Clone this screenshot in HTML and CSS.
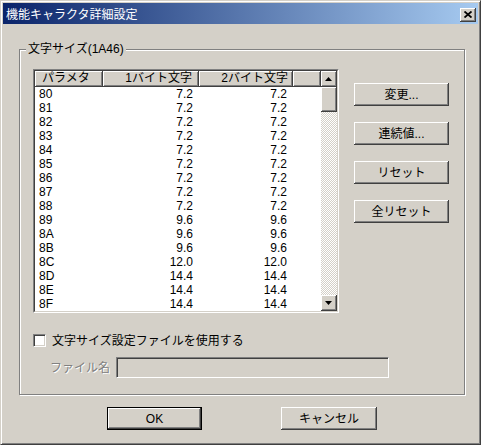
FILE: index.html
```html
<!DOCTYPE html>
<html lang="ja">
<head>
<meta charset="utf-8">
<title>機能キャラクタ詳細設定</title>
<link rel="stylesheet" href="styles.css">
</head>
<body>
<div class="window">
  <div class="titlebar">
    <span class="title">機能キャラクタ詳細設定</span>
    <span class="close raised">
      <svg width="8" height="7" viewBox="0 0 8 7"><path d="M0.5 0.5 L7.5 6.5 M7.5 0.5 L0.5 6.5" stroke="#000" stroke-width="1.8" fill="none"/></svg>
    </span>
  </div>
  <div class="group">
    <span class="legend">文字サイズ(1A46)</span>
    <div class="main">
      <div class="list">
        <div class="list-body">
          <div class="grid-area">
            <div class="hdr">
              <div class="hcell c1">パラメタ</div>
              <div class="hcell c2 r">1バイト文字</div>
              <div class="hcell c3 r">2バイト文字</div>
              <div class="hcell c4"></div>
            </div>
            <div class="rows">
              <div class="row"><span class="c1">80</span><span class="c2 r">7.2</span><span class="c3 r">7.2</span></div>
              <div class="row"><span class="c1">81</span><span class="c2 r">7.2</span><span class="c3 r">7.2</span></div>
              <div class="row"><span class="c1">82</span><span class="c2 r">7.2</span><span class="c3 r">7.2</span></div>
              <div class="row"><span class="c1">83</span><span class="c2 r">7.2</span><span class="c3 r">7.2</span></div>
              <div class="row"><span class="c1">84</span><span class="c2 r">7.2</span><span class="c3 r">7.2</span></div>
              <div class="row"><span class="c1">85</span><span class="c2 r">7.2</span><span class="c3 r">7.2</span></div>
              <div class="row"><span class="c1">86</span><span class="c2 r">7.2</span><span class="c3 r">7.2</span></div>
              <div class="row"><span class="c1">87</span><span class="c2 r">7.2</span><span class="c3 r">7.2</span></div>
              <div class="row"><span class="c1">88</span><span class="c2 r">7.2</span><span class="c3 r">7.2</span></div>
              <div class="row"><span class="c1">89</span><span class="c2 r">9.6</span><span class="c3 r">9.6</span></div>
              <div class="row"><span class="c1">8A</span><span class="c2 r">9.6</span><span class="c3 r">9.6</span></div>
              <div class="row"><span class="c1">8B</span><span class="c2 r">9.6</span><span class="c3 r">9.6</span></div>
              <div class="row"><span class="c1">8C</span><span class="c2 r">12.0</span><span class="c3 r">12.0</span></div>
              <div class="row"><span class="c1">8D</span><span class="c2 r">14.4</span><span class="c3 r">14.4</span></div>
              <div class="row"><span class="c1">8E</span><span class="c2 r">14.4</span><span class="c3 r">14.4</span></div>
              <div class="row"><span class="c1">8F</span><span class="c2 r">14.4</span><span class="c3 r">14.4</span></div>
            </div>
          </div>
          <div class="sb">
            <div class="sbtn raised"><svg width="7" height="4" viewBox="0 0 7 4"><path d="M3.5 0 L7 4 L0 4 Z" fill="#000"/></svg></div>
            <div class="track"><div class="thumb raised"></div></div>
            <div class="sbtn raised"><svg width="7" height="4" viewBox="0 0 7 4"><path d="M0 0 L7 0 L3.5 4 Z" fill="#000"/></svg></div>
          </div>
        </div>
      </div>
      <div class="btns">
        <div class="btn raised">変更...</div>
        <div class="btn raised">連続値...</div>
        <div class="btn raised">リセット</div>
        <div class="btn raised">全リセット</div>
      </div>
    </div>
    <div class="check-row">
      <span class="cb"></span>
      <span class="cb-label">文字サイズ設定ファイルを使用する</span>
    </div>
    <div class="file-row">
      <span class="flabel">ファイル名</span>
      <span class="finput"></span>
    </div>
  </div>
  <div class="footer">
    <div class="btn raised default">OK</div>
    <div class="btn raised cancel">キャンセル</div>
  </div>
</div>
</body>
</html>
```
FILE: styles.css
```css
* { box-sizing: border-box; }
body {
  margin: 0;
  background: #fff;
  font-family: "Liberation Sans", "Noto Sans CJK JP", sans-serif;
  font-size: 12px;
  color: #000;
}
.window {
  width: 481px;
  height: 445px;
  background: #d4d0c8;
  border: 1px solid;
  border-color: #d4d0c8 #404040 #404040 #d4d0c8;
  box-shadow: inset 1px 1px #fff, inset -1px -1px #808080;
  padding: 2px;
  display: flex;
  flex-direction: column;
}
.titlebar {
  height: 21px;
  flex: none;
  background: linear-gradient(to right, #0a246a, #a6caf0);
  display: flex;
  align-items: center;
  justify-content: space-between;
  padding: 0 2px 0 3px;
}
.title {
  color: #fff;
  font-weight: normal;
  font-size: 12px;
  line-height: 14px;
  font-family: "Noto Sans CJK JP", sans-serif;
}
.raised {
  background: #d4d0c8;
  box-shadow: inset -1px -1px #404040, inset 1px 1px #fff, inset -2px -2px #808080;
}
.close {
  width: 16px;
  height: 14px;
  display: flex;
  align-items: center;
  justify-content: center;
  margin-top: 2px;
}
.close svg { margin: 0 1px 1px 0; }
.group {
  position: relative;
  margin: 25px 0 0 16px;
  width: 446px;
  border: 1px solid #808080;
  box-shadow: inset 1px 1px #fff, 1px 1px #fff;
  padding: 19px 0 16px 13px;
  flex: none;
}
.legend {
  position: absolute;
  left: 6px;
  top: -8px;
  padding: 0 2px;
  background: #d4d0c8;
  line-height: 14px;
}
.main { display: flex; }
.list {
  width: 306px;
  height: 244px;
  border: 1px solid;
  border-color: #808080 #fff #fff #808080;
}
.list-body {
  height: 100%;
  border: 1px solid;
  border-color: #404040 #d4d0c8 #d4d0c8 #404040;
  background: #fff;
  display: flex;
}
.grid-area { width: 286px; }
.hdr { display: flex; height: 16px; }
.hcell {
  height: 16px;
  line-height: 15px;
  background: #d4d0c8;
  box-shadow: inset 1px 1px #fff, inset -1px -1px #808080;
  border-right: 1px solid #404040;
  border-bottom: 1px solid #404040;
  white-space: nowrap;
}
.c1 { width: 68px; padding-left: 4px; }
.c2 { width: 96px; padding-right: 6px; }
.c3 { width: 94px; padding-right: 6px; }
.c4 { width: 28px; }
.r { text-align: right; }
.hcell.c1 { padding-left: 7px; }
.hcell.c2 { padding-right: 6px; }
.hcell.c3 { padding-right: 4px; }
.row { display: flex; height: 14px; line-height: 14px; }
.row span { display: block; }
.sb {
  width: 16px;
  display: flex;
  flex-direction: column;
  background: conic-gradient(#d4d0c8 25%, #fff 0 50%, #d4d0c8 0 75%, #fff 0) 0 0 / 2px 2px;
}
.sbtn {
  width: 16px;
  height: 16px;
  flex: none;
  display: flex;
  align-items: center;
  justify-content: center;
}
.sbtn svg { margin: 0 1px 1px 0; }
.track { flex: 1; }
.thumb { width: 16px; height: 25px; }
.btns {
  margin-left: 15px;
  padding-top: 14px;
  display: flex;
  flex-direction: column;
  gap: 16px;
}
.btn {
  width: 95px;
  height: 23px;
  display: flex;
  align-items: center;
  justify-content: center;
  line-height: 14px;
}
.check-row {
  margin-top: 21px;
  height: 13px;
  display: flex;
  align-items: center;
}
.cb {
  width: 13px;
  height: 13px;
  background: #fff;
  border: 1px solid;
  border-color: #808080 #fff #fff #808080;
  box-shadow: inset 1px 1px #404040, inset -1px -1px #d4d0c8;
}
.cb-label { margin-left: 6px; line-height: 14px; }
.file-row {
  margin-top: 10px;
  height: 21px;
  display: flex;
  align-items: center;
}
.flabel {
  margin-left: 17px;
  width: 66px;
  color: #808080;
  text-shadow: 1px 1px #fff;
  line-height: 14px;
}
.finput {
  width: 273px;
  height: 21px;
  background: #d4d0c8;
  border: 1px solid;
  border-color: #808080 #fff #fff #808080;
  box-shadow: inset 1px 1px #404040, inset -1px -1px #d4d0c8;
}
.footer {
  display: flex;
  margin-top: 12px;
  padding-left: 104px;
}
.default {
  border: 1px solid #000;
}
.cancel {
  width: 96px;
  margin-left: 79px;
}
```
